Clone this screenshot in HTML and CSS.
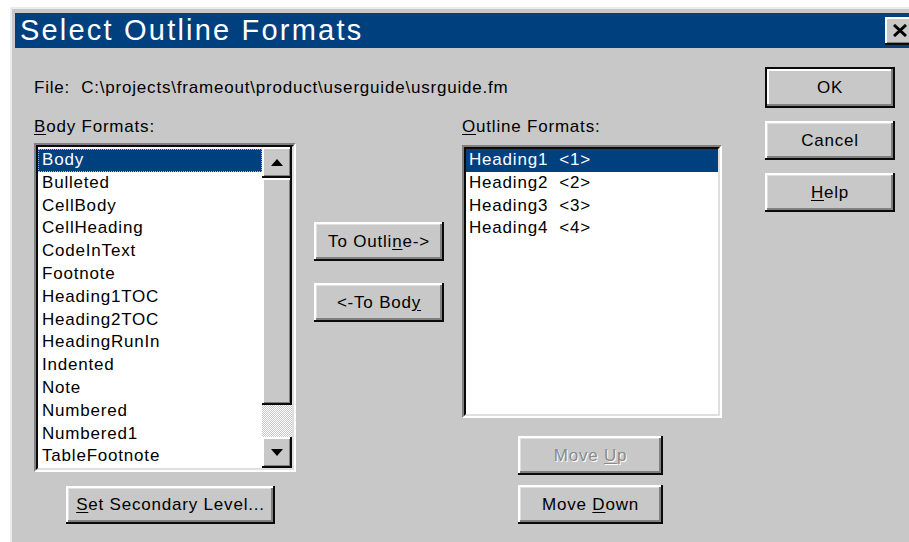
FILE: index.html
```html
<!DOCTYPE html>
<html>
<head>
<meta charset="utf-8">
<title>Select Outline Formats</title>
<link rel="stylesheet" href="styles.css">
</head>
<body>
<div class="dialog">
  <div class="titlebar">
    <span class="title">Select Outline Formats</span>
    <button class="close" aria-label="Close">
      <svg width="14" height="13" viewBox="0 0 14 13"><path d="M1 1 L13 12 M13 1 L1 12" stroke="#000" stroke-width="3"/></svg>
    </button>
  </div>
  <div class="content">
    <div class="main">
      <div class="file">File:&nbsp; C:\projects\frameout\product\userguide\usrguide.fm</div>
      <div class="columns">
        <div class="col col-body">
          <div class="label"><u>B</u>ody Formats:</div>
          <div class="listbox body-box">
            <div class="listinner">
              <ul class="items body-items">
                <li class="selected focused">Body</li>
                <li>Bulleted</li>
                <li>CellBody</li>
                <li>CellHeading</li>
                <li>CodeInText</li>
                <li>Footnote</li>
                <li>Heading1TOC</li>
                <li>Heading2TOC</li>
                <li>HeadingRunIn</li>
                <li>Indented</li>
                <li>Note</li>
                <li>Numbered</li>
                <li>Numbered1</li>
                <li>TableFootnote</li>
              </ul>
              <div class="scrollbar">
                <div class="sb-btn">
                  <svg width="12" height="7" viewBox="0 0 12 7"><path d="M6 0 L12 7 L0 7 Z" fill="#000"/></svg>
                </div>
                <div class="sb-thumb"></div>
                <div class="sb-track"></div>
                <div class="sb-btn">
                  <svg width="12" height="7" viewBox="0 0 12 7"><path d="M0 0 L12 0 L6 7 Z" fill="#000"/></svg>
                </div>
              </div>
            </div>
          </div>
          <button class="btn btn-secondary"><span><u>S</u>et Secondary Level...</span></button>
        </div>
        <div class="col col-move">
          <button class="btn btn-to-outline"><span>To Outli<u>n</u>e-&gt;</span></button>
          <button class="btn btn-to-body"><span>&lt;-To Bod<u>y</u></span></button>
        </div>
        <div class="col col-outline">
          <div class="label"><u>O</u>utline Formats:</div>
          <div class="listbox outline-box">
            <div class="listinner">
              <ul class="items outline-items">
                <li class="selected">Heading1  &lt;1&gt;</li>
                <li>Heading2  &lt;2&gt;</li>
                <li>Heading3  &lt;3&gt;</li>
                <li>Heading4  &lt;4&gt;</li>
              </ul>
            </div>
          </div>
          <button class="btn btn-move btn-up" disabled><span>Move <u>U</u>p</span></button>
          <button class="btn btn-move btn-down"><span>Move <u>D</u>own</span></button>
        </div>
      </div>
    </div>
    <div class="side">
      <button class="btn btn-side btn-default"><span>OK</span></button>
      <button class="btn btn-side"><span>Cancel</span></button>
      <button class="btn btn-side"><span><u>H</u>elp</span></button>
    </div>
  </div>
</div>
</body>
</html>
```

FILE: styles.css
```css
html, body {
  margin: 0;
  padding: 0;
  overflow: hidden;
  background: #ffffff;
}

body {
  width: 909px;
  height: 542px;
  font-family: "Liberation Sans", Arial, sans-serif;
  font-size: 17px;
  letter-spacing: 0.8px;
  color: #000;
}

.dialog {
  margin: 7px 0 0 10px;
  width: 920px;
  height: 560px;
  background: #c8c8c8;
  border-top: 2px solid #ececec;
  border-left: 2px solid #ececec;
  box-sizing: border-box;
}

/* caption bar */
.titlebar {
  margin: 4px 0 0 3px;
  height: 35px;
  background: #00407f;
  display: flex;
  align-items: center;
  padding-left: 5px;
}

.title {
  color: #fff;
  font-size: 29px;
  letter-spacing: 2.2px;
  line-height: 35px;
  flex: 1;
}

.close {
  width: 30px;
  height: 28px;
  margin-right: 15px;
  padding: 0;
  border: none;
  background: #c8c8c8;
  box-shadow: inset -2px -2px #0a0a0a, inset 2px 2px #fff, inset -3px -3px #808080;
  display: flex;
  align-items: center;
  justify-content: center;
}

/* dialog body */
.content {
  display: flex;
  padding-left: 22px;
}

.main {
  width: 688px;
  padding-top: 30px;
}

.file {
  line-height: 20px;
  white-space: nowrap;
}

.columns {
  display: flex;
  gap: 18px;
  margin-top: 19px;
}

.col {
  display: flex;
  flex-direction: column;
  align-items: flex-start;
}

.label {
  line-height: 20px;
}

u {
  text-decoration-thickness: 1px;
  text-underline-offset: 2px;
}

/* sunken list boxes */
.listbox {
  border: 2px solid;
  border-color: #808080 #fff #fff #808080;
  box-sizing: border-box;
}

.listinner {
  border: 2px solid;
  border-color: #0a0a0a #dfdfdf #dfdfdf #0a0a0a;
  background: #fff;
  height: 100%;
  box-sizing: border-box;
  display: flex;
}

.items {
  list-style: none;
  margin: 0;
  padding: 0;
  flex: 1;
}

.items li {
  white-space: pre;
}

.body-box {
  margin-top: 6px;
  width: 262px;
  height: 329px;
}

.body-items {
  padding-top: 2px;
}

.body-items li {
  line-height: 22.8px;
  padding-left: 4px;
}

.outline-box {
  margin-top: 8px;
  width: 260px;
  height: 273px;
}

.outline-items li {
  line-height: 22.8px;
  padding-left: 3px;
}

.items li.selected {
  background: #00407f;
  color: #fff;
}

.items li.focused {
  outline: 1px dotted #e2a860;
  outline-offset: -1px;
}

/* vertical scroll bar */
.scrollbar {
  width: 30px;
  display: flex;
  flex-direction: column;
}

.sb-btn,
.sb-thumb {
  background: #c8c8c8;
  box-shadow: inset -2px -2px #0a0a0a, inset 2px 2px #fff, inset -3px -3px #808080;
}

.sb-btn {
  height: 31px;
  display: flex;
  align-items: center;
  justify-content: center;
}

.sb-thumb {
  height: 227px;
}

.sb-track {
  height: 32px;
  background: repeating-conic-gradient(#ffffff 0 25%, #c8c8c8 0 50%) 0 0 / 2px 2px;
}

/* push buttons */
.btn {
  font-family: "Liberation Sans", Arial, sans-serif;
  font-size: 17px;
  letter-spacing: 0.8px;
  color: #000;
  background: #c8c8c8;
  border: none;
  padding: 0;
  box-shadow: inset -2px -2px #0a0a0a, inset 2px 2px #fff, inset -4px -4px #808080, inset 3px 3px #e0e0e0;
  display: flex;
  align-items: center;
  justify-content: center;
  box-sizing: border-box;
}

.btn:disabled {
  color: #8a8a8a;
  text-shadow: 1px 1px #fff;
}

.btn-secondary {
  margin-top: 14px;
  margin-left: 32px;
  width: 209px;
  height: 38px;
}

.col-move .btn {
  width: 130px;
  height: 39px;
}

.btn-to-outline {
  margin-top: 105px;
}

.btn-to-body {
  margin-top: 22px;
}

.btn-move {
  width: 145px;
  height: 39px;
  margin-left: 56px;
}

.btn-up {
  margin-top: 18px;
}

.btn-down {
  margin-top: 10px;
}

.side {
  margin-left: 43px;
  padding-top: 19px;
  display: flex;
  flex-direction: column;
  gap: 13px;
}

.btn-side {
  width: 130px;
  height: 39px;
}

.btn-default {
  height: 41px;
  border: 2px solid #0a0a0a;
  box-shadow: inset -2px -2px #808080, inset 2px 2px #fff;
}
```
